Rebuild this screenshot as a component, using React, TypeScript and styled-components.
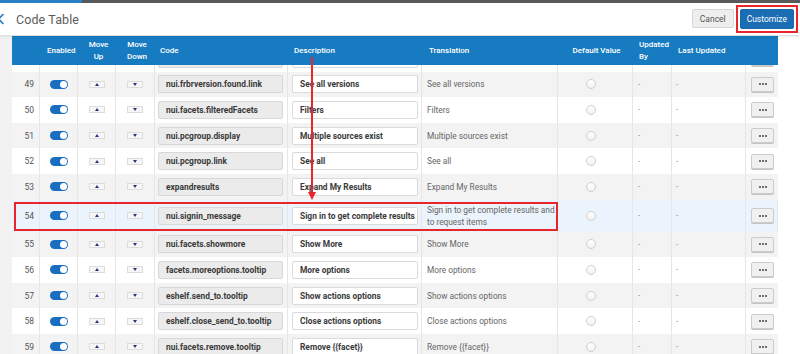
import React from "react";
import styled, { createGlobalStyle } from "styled-components";

const GlobalStyle = createGlobalStyle`
  html, body { margin: 0; padding: 0; }
  body {
    font-family: Roboto, "Noto Sans", "Liberation Sans", sans-serif;
    background: #ffffff;
    width: 800px;
    height: 354px;
    overflow: hidden;
  }
  * { box-sizing: border-box; }
`;

const COLS = "28px 38px 38px 39px 133px 134px 136px 75px 39px 74px 32px";

const Page = styled.div`
  width: 800px;
  height: 354px;
  display: flex;
  flex-direction: column;
  overflow: hidden;
`;

const TopStrip = styled.div`
  flex-shrink: 0;
  height: 3px;
  display: flex;
  background: #5a5a5a;
`;

const StripAccent = styled.div`
  width: 82px;
  background: #2a80c4;
`;

const PageHeader = styled.header`
  flex-shrink: 0;
  height: 32px;
  display: flex;
  align-items: center;
  justify-content: space-between;
  padding-right: 6px;
  background: #fff;
  box-shadow: 0 1px 3px rgba(0, 0, 0, 0.12);
  position: relative;
  z-index: 2;
`;

const TitleGroup = styled.div`
  display: flex;
  align-items: center;
  gap: 11px;
  margin-left: -3px;
`;

const Title = styled.h1`
  margin: 0;
  font-size: 12.5px;
  font-weight: 400;
  color: #5c5c5c;
  letter-spacing: 0.1px;
`;

const Actions = styled.div`
  display: flex;
  align-items: center;
  gap: 6px;
  margin-top: -1px;
`;

const Button = styled.button<{ $primary?: boolean }>`
  height: ${(p) => (p.$primary ? 20 : 19)}px;
  padding: 0 ${(p) => (p.$primary ? 6 : 7)}px;
  font-family: inherit;
  font-size: 8.5px;
  border-radius: 2px;
  border: 1px solid ${(p) => (p.$primary ? "#1a69ad" : "#d6d6d6")};
  background: ${(p) => (p.$primary ? "#1b6db4" : "#eeeeee")};
  color: ${(p) => (p.$primary ? "#ffffff" : "#555555")};
  cursor: pointer;
`;

const Highlight = styled.div`
  outline: 2px solid #e8262a;
  outline-offset: 2px;
  display: flex;
`;

const Main = styled.div`
  flex: 1;
  min-height: 0;
  display: flex;
  padding-top: 1px;
  background: #f2f2f2;
  position: relative;
`;

const Table = styled.div`
  margin-left: 12px;
  width: 766px;
  display: flex;
  flex-direction: column;
  overflow: hidden;
`;

const RightGutter = styled.div`
  flex: 1;
  background: #ffffff;
`;

const HeadRow = styled.div`
  flex-shrink: 0;
  display: grid;
  grid-template-columns: ${COLS};
  height: 29px;
  background: #177bc1;
  color: #ffffff;
  font-size: 8px;
  font-weight: 500;
  line-height: 12px;
`;

const HeadCell = styled.div<{ $align?: "left" | "center"; $pad?: number }>`
  display: flex;
  align-items: center;
  justify-content: ${(p) => (p.$align === "center" ? "center" : "flex-start")};
  text-align: ${(p) => p.$align ?? "left"};
  padding-left: ${(p) => p.$pad ?? 0}px;
  white-space: pre-line;
`;

const Body = styled.div`
  flex: 1;
  min-height: 0;
  overflow: hidden;
`;

const Rows = styled.div`
  margin-top: -19px;
`;

const Row = styled.div<{ $tone: "white" | "gray" | "blue"; $tall?: boolean }>`
  position: relative;
  display: grid;
  grid-template-columns: ${COLS};
  height: ${(p) => (p.$tall ? 32 : 25.6)}px;
  background: ${(p) =>
    p.$tone === "gray" ? "#f3f3f3" : p.$tone === "blue" ? "#ebf3fc" : "#ffffff"};
`;

const Cell = styled.div<{ $justify?: string; $pad?: number; $padRight?: number }>`
  display: flex;
  align-items: center;
  justify-content: ${(p) => p.$justify ?? "flex-start"};
  padding-left: ${(p) => p.$pad ?? 0}px;
  padding-right: ${(p) => p.$padRight ?? 0}px;
  border-right: 1px solid #e6e6e6;
  min-width: 0;
  &:last-child { border-right: none; }
`;

const RowNum = styled.span`
  font-size: 8.5px;
  color: #555;
`;

const Toggle = styled.span`
  width: 18px;
  height: 9px;
  border-radius: 5px;
  background: #1a6ec2;
  display: flex;
  align-items: center;
  justify-content: flex-end;
  padding-right: 1px;
`;

const Knob = styled.span`
  width: 7px;
  height: 7px;
  border-radius: 50%;
  background: #fff;
`;

const MoveButton = styled.span<{ $dir: "up" | "down" }>`
  width: 16px;
  height: 7px;
  background: #f6f6f6;
  border: 1px solid #dcdcdc;
  display: flex;
  align-items: center;
  justify-content: center;
  &::after {
    content: "";
    width: 0;
    height: 0;
    border-left: 2.5px solid transparent;
    border-right: 2.5px solid transparent;
    ${(p) =>
      p.$dir === "up"
        ? "border-bottom: 3px solid #24358a;"
        : "border-top: 3px solid #24358a;"}
  }
`;

const Field = styled.div<{ $readonly?: boolean; $width: number; $ml: number }>`
  width: ${(p) => p.$width}px;
  margin-left: ${(p) => p.$ml}px;
  height: 18px;
  border: 1px solid ${(p) => (p.$readonly ? "#d8d8d8" : "#dadada")};
  background: ${(p) => (p.$readonly ? "#ebebeb" : "#ffffff")};
  border-radius: 2px;
  padding-left: 7px;
  display: flex;
  align-items: center;
  font-size: 8.4px;
  font-weight: 700;
  color: #3a3a3a;
  white-space: nowrap;
  overflow: hidden;
`;

const Translation = styled.span`
  font-size: 8.3px;
  color: #666;
  line-height: 12px;
`;

const Radio = styled.span`
  width: 10px;
  height: 10px;
  border-radius: 50%;
  border: 1px solid #cfcfcf;
  background: linear-gradient(#ffffff, #f1f1f1);
`;

const Dash = styled.span`
  font-size: 8px;
  color: #888;
`;

const MoreButton = styled.span`
  width: 23px;
  height: 15px;
  border-radius: 2px;
  border: 1px solid #cccccc;
  background: #f0f0f0;
  box-shadow: 0 1px 0 #c4c4c4;
  display: flex;
  align-items: center;
  justify-content: center;
  gap: 1px;
`;

const Dot = styled.span`
  width: 2px;
  height: 2px;
  border-radius: 50%;
  background: #444;
`;

const RowMarker = styled.div`
  position: absolute;
  left: 2px;
  top: 2px;
  width: 544px;
  height: 29px;
  border: 2px solid #e8262a;
  pointer-events: none;
`;

const ArrowLine = styled.div`
  position: absolute;
  left: 311px;
  top: 22px;
  width: 2px;
  height: 136px;
  background: #e8262a;
  pointer-events: none;
`;

const ArrowHead = styled.div`
  position: absolute;
  left: 307.5px;
  top: 157px;
  width: 0;
  height: 0;
  border-left: 4.5px solid transparent;
  border-right: 4.5px solid transparent;
  border-top: 8px solid #e8262a;
  pointer-events: none;
`;

type RowData = { n: number; code: string; desc: string; trans: string };

const rows: RowData[] = [
  { n: 48, code: "nui.frbrversion.link", desc: "See all versions", trans: "See all versions" },
  { n: 49, code: "nui.frbrversion.found.link", desc: "See all versions", trans: "See all versions" },
  { n: 50, code: "nui.facets.filteredFacets", desc: "Filters", trans: "Filters" },
  { n: 51, code: "nui.pcgroup.display", desc: "Multiple sources exist", trans: "Multiple sources exist" },
  { n: 52, code: "nui.pcgroup.link", desc: "See all", trans: "See all" },
  { n: 53, code: "expandresults", desc: "Expand My Results", trans: "Expand My Results" },
  {
    n: 54,
    code: "nui.signin_message",
    desc: "Sign in to get complete results and to request items",
    trans: "Sign in to get complete results and to request items",
  },
  { n: 55, code: "nui.facets.showmore", desc: "Show More", trans: "Show More" },
  { n: 56, code: "facets.moreoptions.tooltip", desc: "More options", trans: "More options" },
  { n: 57, code: "eshelf.send_to.tooltip", desc: "Show actions options", trans: "Show actions options" },
  { n: 58, code: "eshelf.close_send_to.tooltip", desc: "Close actions options", trans: "Close actions options" },
  { n: 59, code: "nui.facets.remove.tooltip", desc: "Remove {{facet}}", trans: "Remove {{facet}}" },
  { n: 60, code: "nui.facets.clear", desc: "Clear", trans: "Clear" },
];

const Chevron = () => (
  <svg width="8" height="12" viewBox="0 0 8 12" aria-hidden="true">
    <path d="M6.5 1 L1.5 6 L6.5 11" fill="none" stroke="#2a7ec2" strokeWidth="1.6" />
  </svg>
);

export default function App() {
  return (
    <>
      <GlobalStyle />
      <Page>
        <TopStrip>
          <StripAccent />
        </TopStrip>
        <PageHeader>
          <TitleGroup>
            <Chevron />
            <Title>Code Table</Title>
          </TitleGroup>
          <Actions>
            <Button>Cancel</Button>
            <Highlight>
              <Button $primary>Customize</Button>
            </Highlight>
          </Actions>
        </PageHeader>
        <Main>
          <Table>
            <HeadRow>
              <HeadCell />
              <HeadCell $pad={7}>Enabled</HeadCell>
              <HeadCell $align="center" $pad={3}>{"Move\nUp"}</HeadCell>
              <HeadCell $align="center" $pad={3}>{"Move\nDown"}</HeadCell>
              <HeadCell $pad={5}>Code</HeadCell>
              <HeadCell $pad={6}>Description</HeadCell>
              <HeadCell $pad={7}>Translation</HeadCell>
              <HeadCell $align="center" $pad={2}>Default Value</HeadCell>
              <HeadCell $pad={6}>{"Updated\nBy"}</HeadCell>
              <HeadCell $pad={6}>Last Updated</HeadCell>
              <HeadCell />
            </HeadRow>
            <Body>
              <Rows>
                {rows.map((r) => {
                  const tall = r.n === 54;
                  const tone = tall ? "blue" : r.n % 2 === 1 ? "gray" : "white";
                  return (
                    <Row key={r.n} $tone={tone} $tall={tall}>
                      <Cell $justify="flex-end" $padRight={5}>
                        <RowNum>{r.n}</RowNum>
                      </Cell>
                      <Cell $pad={10}>
                        <Toggle>
                          <Knob />
                        </Toggle>
                      </Cell>
                      <Cell $justify="center">
                        <MoveButton $dir="up" />
                      </Cell>
                      <Cell $justify="center">
                        <MoveButton $dir="down" />
                      </Cell>
                      <Cell>
                        <Field $readonly $width={125} $ml={3}>
                          {r.code}
                        </Field>
                      </Cell>
                      <Cell>
                        <Field $width={126} $ml={4}>
                          {r.desc}
                        </Field>
                      </Cell>
                      <Cell $pad={5}>
                        <Translation>{r.trans}</Translation>
                      </Cell>
                      <Cell $pad={28}>
                        <Radio />
                      </Cell>
                      <Cell $pad={5}>
                        <Dash>-</Dash>
                      </Cell>
                      <Cell $pad={4}>
                        <Dash>-</Dash>
                      </Cell>
                      <Cell $pad={5}>
                        <MoreButton>
                          <Dot />
                          <Dot />
                          <Dot />
                        </MoreButton>
                      </Cell>
                      {tall && <RowMarker />}
                    </Row>
                  );
                })}
              </Rows>
            </Body>
          </Table>
          <RightGutter />
          <ArrowLine />
          <ArrowHead />
        </Main>
      </Page>
    </>
  );
}
